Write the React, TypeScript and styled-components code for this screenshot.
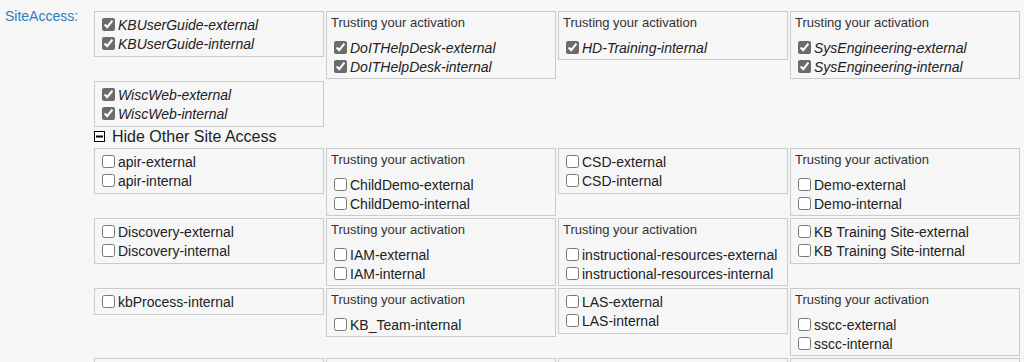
import styled, { createGlobalStyle } from 'styled-components'

interface SiteGroup {
  trusting?: boolean
  granted?: boolean
  sites: string[]
}

const GlobalStyle = createGlobalStyle`
  html, body {
    margin: 0;
    padding: 0;
    background: #f6f6f6;
    font-family: 'Liberation Sans', Arial, sans-serif;
    color: #222;
  }
`

const grantedGroups: SiteGroup[] = [
  { granted: true, sites: ['KBUserGuide-external', 'KBUserGuide-internal'] },
  { granted: true, trusting: true, sites: ['DoITHelpDesk-external', 'DoITHelpDesk-internal'] },
  { granted: true, trusting: true, sites: ['HD-Training-internal'] },
  { granted: true, trusting: true, sites: ['SysEngineering-external', 'SysEngineering-internal'] },
  { granted: true, sites: ['WiscWeb-external', 'WiscWeb-internal'] }
]

const otherGroups: SiteGroup[] = [
  { sites: ['apir-external', 'apir-internal'] },
  { trusting: true, sites: ['ChildDemo-external', 'ChildDemo-internal'] },
  { sites: ['CSD-external', 'CSD-internal'] },
  { trusting: true, sites: ['Demo-external', 'Demo-internal'] },
  { sites: ['Discovery-external', 'Discovery-internal'] },
  { trusting: true, sites: ['IAM-external', 'IAM-internal'] },
  { trusting: true, sites: ['instructional-resources-external', 'instructional-resources-internal'] },
  { sites: ['KB Training Site-external', 'KB Training Site-internal'] },
  { sites: ['kbProcess-internal'] },
  { trusting: true, sites: ['KB_Team-internal'] },
  { sites: ['LAS-external', 'LAS-internal'] },
  { trusting: true, sites: ['sscc-external', 'sscc-internal'] }
]

// next row of groups starts just at the bottom edge of the view
const pendingRow = [1, 2, 3, 4]

function GroupBox({ group }: { group: SiteGroup }) {
  return (
    <Box>
      {group.trusting && <BoxHeading>Trusting your activation</BoxHeading>}
      {group.sites.map((site) => (
        <SiteItem key={site} $granted={!!group.granted}>
          <Check type="checkbox" defaultChecked={!!group.granted} $granted={!!group.granted} />
          <span>{site}</span>
        </SiteItem>
      ))}
    </Box>
  )
}

export default function App() {
  return (
    <>
      <GlobalStyle />
      <Page>
        <FieldLabel>SiteAccess:</FieldLabel>
        <Grid>
          {grantedGroups.map((g) => (
            <GroupBox key={g.sites[0]} group={g} />
          ))}
          <Toggle>
            <svg width="11" height="11" viewBox="0 0 11 11">
              <rect x="0.5" y="0.5" width="10" height="10" fill="#fff" stroke="#000" />
              <rect x="2" y="4.5" width="7" height="2" fill="#000" />
            </svg>
            <span>Hide Other Site Access</span>
          </Toggle>
          {otherGroups.map((g) => (
            <GroupBox key={g.sites[0]} group={g} />
          ))}
          {pendingRow.map((n) => (
            <EmptyBox key={n} />
          ))}
        </Grid>
      </Page>
    </>
  )
}

// Styled Components

const Page = styled.div`
  display: flex;
  align-items: flex-start;
`

const FieldLabel = styled.div`
  width: 89px;
  padding: 8px 0 0 5px;
  font-size: 14px;
  line-height: 16px;
  color: #2a7dc0;
`

const Grid = styled.div`
  display: grid;
  grid-template-columns: repeat(4, 230px);
  gap: 2px;
  align-items: start;
  padding-top: 11px;
`

const Box = styled.div`
  border: 1px solid #cbcbcb;
  padding: 3px;
`

const EmptyBox = styled(Box)`
  height: 38px;
`

const BoxHeading = styled.div`
  font-size: 13px;
  line-height: 15px;
  height: 23px;
  padding-left: 1px;
  color: #333;
`

const SiteItem = styled.label<{ $granted: boolean }>`
  display: flex;
  align-items: center;
  height: 19px;
  font-size: 14px;
  font-style: ${(props) => (props.$granted ? 'italic' : 'normal')};
  color: #222;
  white-space: nowrap;

  ${BoxHeading} ~ &:last-child {
    margin-bottom: -1px;
  }
`

const Check = styled.input<{ $granted: boolean }>`
  width: 13px;
  height: 13px;
  margin: 0 3px 0 4px;
  accent-color: ${(props) => (props.$granted ? '#6b6b6b' : '#333')};
  flex-shrink: 0;
`

const Toggle = styled.div`
  grid-column: 1 / -1;
  display: flex;
  align-items: center;
  gap: 7px;
  height: 19px;
  margin-top: -2px;
  font-size: 16px;
  color: #222;

  svg {
    margin-top: -1px;
  }
`
